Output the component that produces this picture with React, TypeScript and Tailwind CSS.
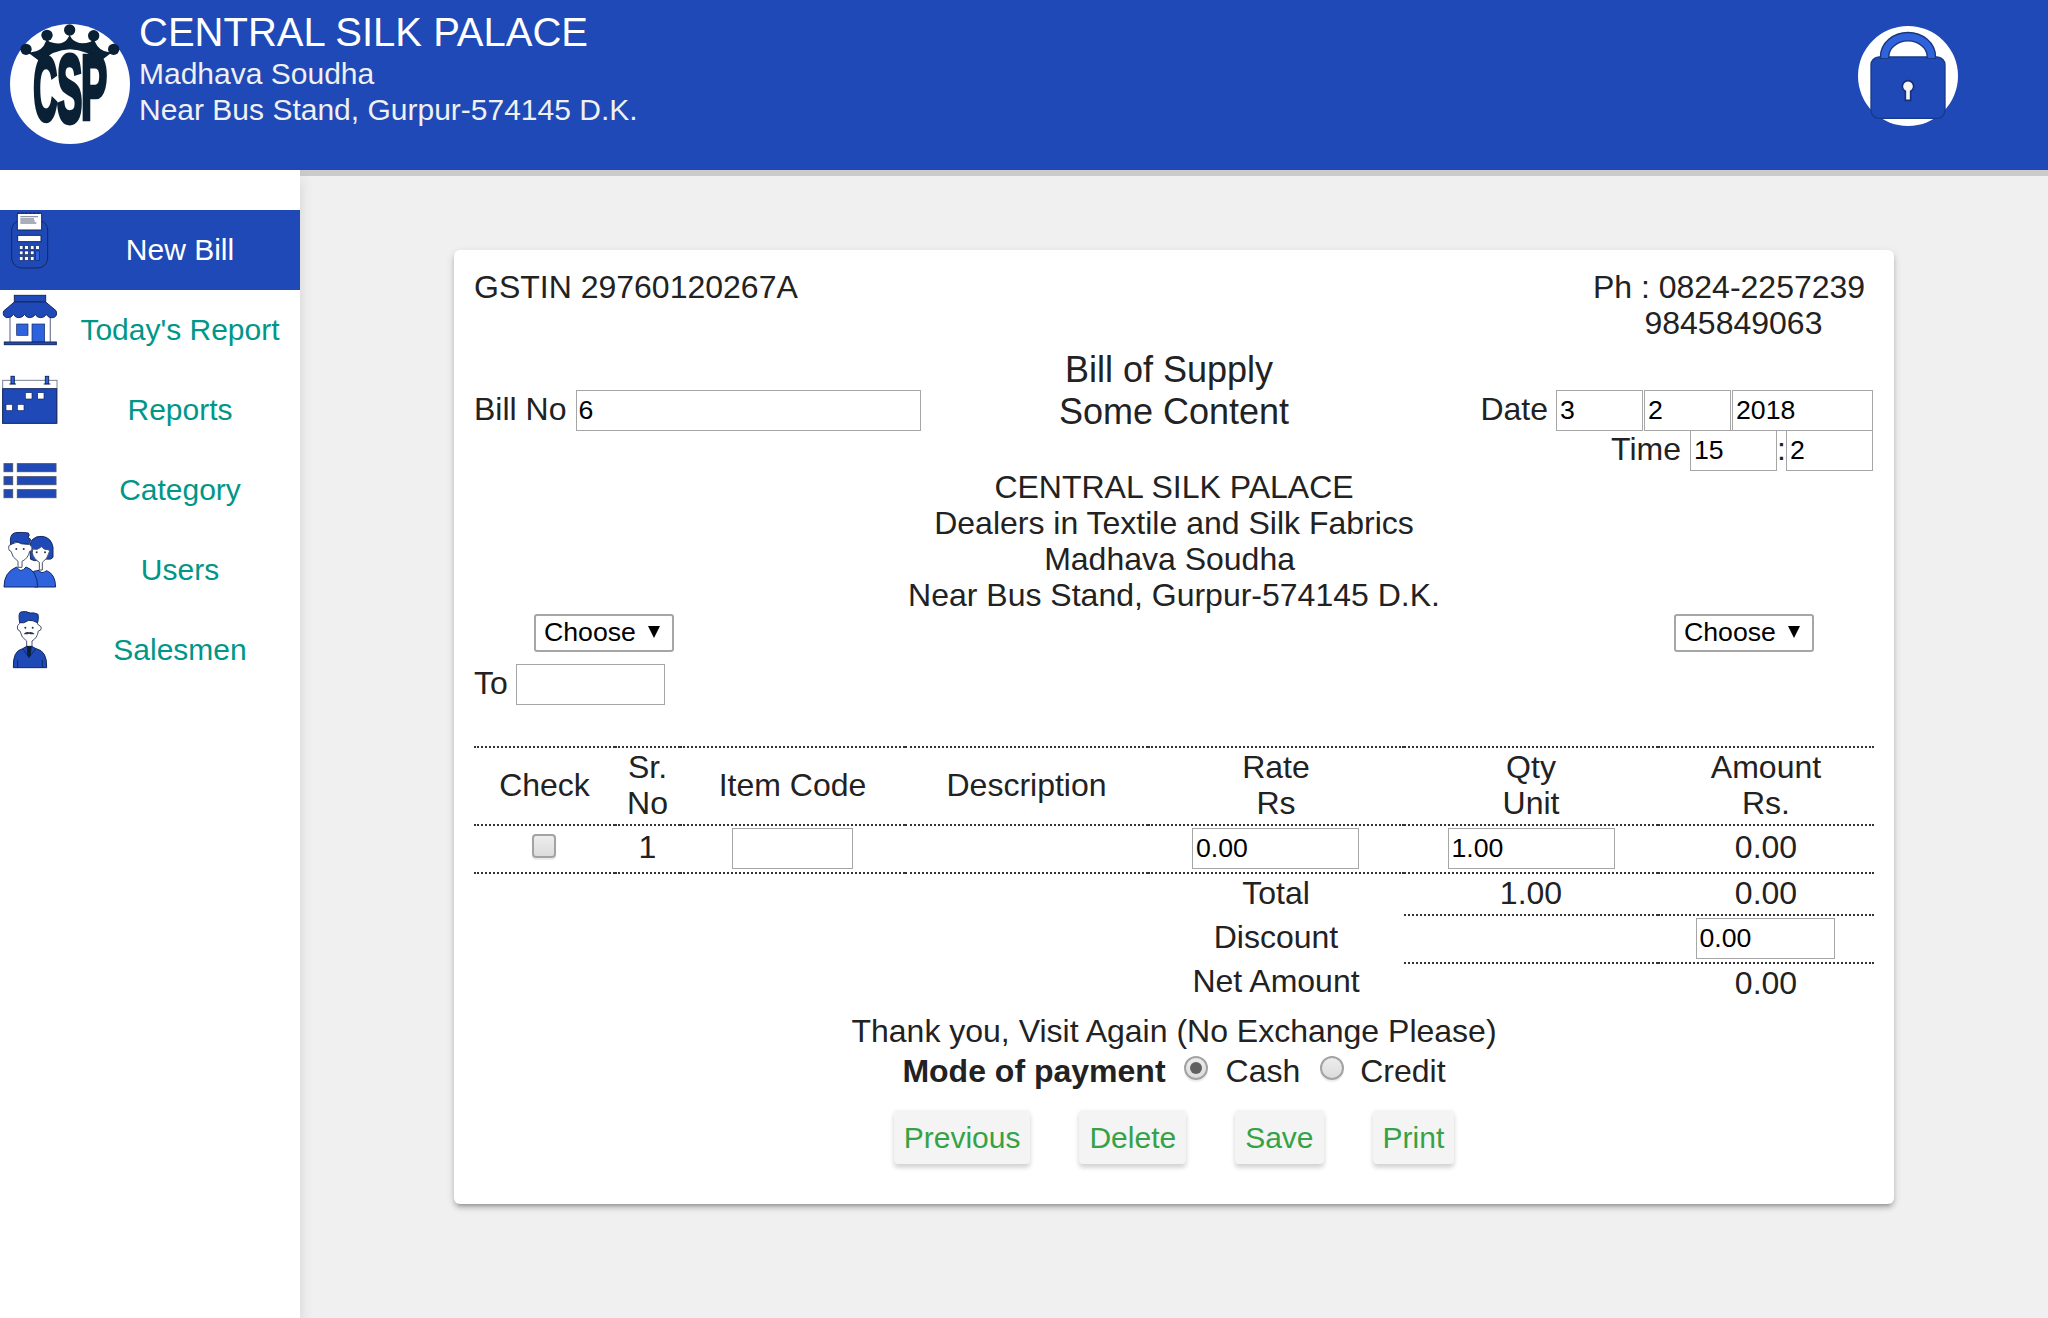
import React from "react";
import clsx from "clsx";

const NAVY = "#0a2034";
const BLUE = "#1f49b6";
const LIGHT = "#2f63dd";
const EDGE = "#14295f";

function Logo() {
  return (
    <svg viewBox="30 27 360 360" className="size-[120px] shrink-0">
      <circle cx="210" cy="207" r="180" fill="#fff" />
      <g fill={NAVY}>
        <circle cx="78" cy="103" r="17" />
        <circle cx="141" cy="61" r="17" />
        <circle cx="209" cy="45" r="17" />
        <circle cx="281" cy="62" r="17" />
        <circle cx="341" cy="103" r="17" />
        <path d="M78 108 L94 112 Q128 108 137 80 L141 72 L148 80 Q186 94 202 72 L209 60 L216 72 Q236 92 272 80 L281 72 L285 80 Q296 108 328 112 L341 108 L298 141 Q260 104 210 103 Q160 104 122 141 Z" />
      </g>
      <g
        fill={NAVY}
        stroke={NAVY}
        strokeWidth="5"
        fontFamily="Liberation Sans"
        fontWeight="700"
        fontSize="100"
      >
        <text transform="translate(100 314) scale(1 2.75)">C</text>
        <text transform="translate(171 320) scale(1.14 2.88)">S</text>
        <text transform="translate(243 313) scale(1.18 2.72)">P</text>
      </g>
    </svg>
  );
}

function LockIcon() {
  return (
    <svg viewBox="234 78 300 300" className="size-[100px]">
      <circle cx="384" cy="228" r="150" fill="#fff" />
      <rect x="273" y="171" width="222" height="184" rx="24" fill={BLUE} stroke="#183a8c" strokeWidth="4" />
      <path d="M314 176 V170 A70 60 0 0 1 454 170 V176" fill="none" stroke="#1c3577" strokeWidth="29" />
      <path d="M314 174 V170 A70 60 0 0 1 454 170 V174" fill="none" stroke={LIGHT} strokeWidth="21" />
      <path
        d="M376 301 V274 A17 17 0 1 1 392 274 V301 Z"
        fill="#f5f5f5"
        stroke="#17307a"
        strokeWidth="5"
      />
    </svg>
  );
}

function BillIcon() {
  return (
    <svg viewBox="0 90 180 180" className="size-[60px]">
      <rect x="35" y="120" width="108" height="144" rx="30" fill={BLUE} stroke={EDGE} strokeWidth="3" />
      <path d="M52 150 V100 H125 V150 Z" fill="#fff" stroke={EDGE} strokeWidth="3" />
      <path d="M52 100 H125" stroke={EDGE} strokeWidth="4" strokeDasharray="6 6" />
      <path d="M61 110 H114 M61 117 H102 M61 123 H104 M61 129 H109" stroke="#8d94a8" strokeWidth="4" />
      <rect x="53" y="166" width="70" height="19" fill="#fff" stroke={EDGE} strokeWidth="3" />
      <g fill="#fff" stroke={EDGE} strokeWidth="2">
        {[197, 213, 230].map((y) =>
          [58, 74, 91].map((x) => <rect key={`${x}-${y}`} x={x} y={y} width="11" height="11" />),
        )}
        <rect x="107" y="197" width="11" height="11" />
        <rect x="107" y="213" width="11" height="28" fill={LIGHT} />
      </g>
    </svg>
  );
}

function ShopIcon() {
  return (
    <svg viewBox="0 330 180 180" className="size-[60px]">
      <path d="M30 400 V486 M151 400 V486" stroke="#8088a0" strokeWidth="4" />
      <rect x="43" y="346" width="94" height="20" fill={BLUE} stroke={EDGE} strokeWidth="3" />
      <path
        d="M43 366 H137 L168 392 Q174 408 160 413 Q145 415 139 403 Q134 413 122 413 Q110 413 106 403 Q101 413 89 413 Q78 413 74 403 Q68 413 56 413 Q45 413 41 403 Q34 414 20 413 Q6 408 11 393 Z"
        fill={BLUE}
        stroke={EDGE}
        strokeWidth="3"
      />
      <rect x="50" y="432" width="34" height="34" fill={LIGHT} stroke={EDGE} strokeWidth="2" />
      <rect x="96" y="432" width="38" height="54" fill={LIGHT} stroke={EDGE} strokeWidth="2" />
      <rect x="13" y="486" width="156" height="8" fill={BLUE} stroke={EDGE} strokeWidth="3" />
    </svg>
  );
}

function CalendarIcon() {
  return (
    <svg viewBox="0 570 180 180" className="size-[60px]">
      <rect x="8" y="601" width="163" height="128" fill="#fff" stroke="#7a8299" strokeWidth="3" />
      <rect x="8" y="626" width="162" height="104" fill={BLUE} stroke={EDGE} strokeWidth="3" />
      <path d="M28 612 H48 M131 612 H151" stroke={EDGE} strokeWidth="3" />
      <rect x="33" y="589" width="10" height="22" fill={LIGHT} stroke={EDGE} strokeWidth="3" />
      <rect x="136" y="589" width="10" height="22" fill={LIGHT} stroke={EDGE} strokeWidth="3" />
      <g fill="#fff" stroke={EDGE} strokeWidth="2">
        <rect x="76" y="638" width="20" height="19" />
        <rect x="113" y="638" width="19" height="19" />
        <rect x="18" y="673" width="19" height="19" />
        <rect x="52" y="673" width="20" height="19" />
      </g>
    </svg>
  );
}

function ListIcon() {
  return (
    <svg viewBox="0 60 180 180" className="size-[60px]">
      <g fill={BLUE} stroke="#4a5470" strokeWidth="3">
        {[101, 140, 179].map((y) => (
          <React.Fragment key={y}>
            <rect x="12" y={y} width="26" height="24" />
            <rect x="52" y={y} width="116" height="24" />
          </React.Fragment>
        ))}
      </g>
    </svg>
  );
}

function UsersIcon() {
  return (
    <svg viewBox="0 300 180 180" className="size-[60px]">
      <g strokeWidth="3" stroke="#4a5470" strokeLinejoin="round">
        <path d="M92 388 Q86 340 96 330 Q108 317 126 319 Q154 322 159 352 L159 382 Q154 390 141 387 L104 392 Z" fill={BLUE} stroke={EDGE} />
        <path d="M98 357 Q114 362 124 350 Q134 362 146 359 Q151 364 146 370 Q143 386 127 397 V420 H118 V397 Q100 386 97 368 Z" fill="#fff" />
        <path d="M101 424 Q110 422 117 421 Q124 434 140 422 Q166 432 167 471 H104 Z" fill={LIGHT} stroke={EDGE} />
        <path d="M33 343 Q24 345 26 355 Q26 363 33 364 Q36 382 54 394 V412 H66 V394 Q84 386 89 364 Q97 363 96 354 Q95 348 89 345 L76 328 Z" fill="#fff" />
        <path d="M32 344 Q27 312 46 308 Q68 306 85 309 Q91 316 84 322 L92 328 Q88 342 86 343 Q62 344 48 334 Q38 338 32 344 Z" fill={BLUE} stroke={EDGE} />
        <path d="M12 471 Q12 426 50 411 Q62 432 78 411 Q112 422 113 471 Z" fill={LIGHT} stroke={EDGE} />
      </g>
      <g fill="#2a3350">
        <circle cx="49" cy="357" r="3" />
        <circle cx="71" cy="357" r="3" />
        <circle cx="110" cy="367" r="3" />
        <circle cx="135" cy="367" r="3" />
      </g>
    </svg>
  );
}

function SalesmanIcon() {
  return (
    <svg viewBox="0 540 180 180" className="size-[60px]">
      <g strokeWidth="3" stroke="#4a5470" strokeLinejoin="round">
        <path d="M59 580 Q51 586 52 594 Q53 602 60 603 Q64 624 80 633 V654 H96 V633 Q112 624 115 603 Q124 602 124 594 Q123 587 115 585 L105 568 H70 Z" fill="#fff" />
        <path d="M59 578 Q54 550 62 546 Q76 542 91 549 Q104 547 114 553 Q117 565 113 578 Q98 570 86 571 Q70 582 59 578 Z" fill={BLUE} stroke={EDGE} />
        <path d="M40 713 Q38 662 68 656 L80 649 H95 L108 656 Q142 662 140 713 Z" fill={BLUE} stroke={EDGE} />
        <path d="M68 656 L87 682 L108 656 M53 690 V713 M127 690 V713" fill="none" stroke={EDGE} />
      </g>
      <path d="M80 649 H95 L92 676 L87 684 L82 676 Z" fill={NAVY} />
      <path d="M71 612 Q78 604 87 607 Q96 604 104 612 Q94 614 87 611 Q80 614 71 612 Z" fill="#2a3350" />
      <circle cx="76" cy="593" r="3" fill="#2a3350" />
      <circle cx="98" cy="593" r="3" fill="#2a3350" />
    </svg>
  );
}

const NAV = [
  { label: "New Bill", Icon: BillIcon, active: true },
  { label: "Today's Report", Icon: ShopIcon },
  { label: "Reports", Icon: CalendarIcon },
  { label: "Category", Icon: ListIcon },
  { label: "Users", Icon: UsersIcon },
  { label: "Salesmen", Icon: SalesmanIcon },
];

function Field({ value = "", className }: { value?: string; className?: string }) {
  return (
    <input
      defaultValue={value}
      className={clsx(
        "block h-[41px] shrink-0 border border-[#a6a6a6] bg-white text-[26.67px] leading-[32px] text-black outline-none",
        className,
      )}
    />
  );
}

function Choose() {
  return (
    <button className="flex h-[38px] w-[140px] items-center rounded-[3px] border-2 border-[#a6a6a6] bg-white pb-0.5 pl-2 text-[26.67px] leading-[32px] text-black">
      Choose
      <svg viewBox="0 0 12 12" className="ml-3 h-3 w-3">
        <path d="M0 0 H12 L6 12 Z" fill="#000" />
      </svg>
    </button>
  );
}

function Radio({ checked = false }: { checked?: boolean }) {
  return (
    <span className="flex size-6 items-center justify-center rounded-full border-2 border-[#a3a3a3] bg-linear-to-b from-[#ededed] to-[#dcdcdc] shadow-[0_2px_1px_rgba(0,0,0,0.08)]">
      {checked && <span className="size-3 rounded-full bg-[#606060]" />}
    </span>
  );
}

function ActionButton({ children }: { children: React.ReactNode }) {
  return (
    <button className="h-[54px] rounded-[4px] bg-[#f4f4f4] px-2.5 pt-0.5 text-[30px] leading-[36px] text-[#35a246] shadow-[0_4px_4px_rgba(0,0,0,0.12),0_2px_6px_rgba(0,0,0,0.08)]">
      {children}
    </button>
  );
}

const RULE = "border-t-2 border-dotted border-[#333]";

export default function App() {
  return (
    <div className="flex h-[1318px] w-[2048px] flex-col overflow-hidden bg-[#f0f0f0] font-['Liberation_Sans',Arial,sans-serif] text-[32px] leading-[36px] text-[#222]">
      <header className="flex h-[170px] shrink-0 justify-between bg-[#1f49b6] pr-[90px] pl-2.5">
        <div className="flex">
          <div className="pt-6">
            <Logo />
          </div>
          <div className="pt-[9px] pl-[9px] text-[30px] text-[#f0f0f0]">
            <h1 className="text-[40px] leading-[47px] text-white">CENTRAL SILK PALACE</h1>
            <p>Madhava Soudha</p>
            <p>Near Bus Stand, Gurpur-574145 D.K.</p>
          </div>
        </div>
        <button className="mt-[26px] h-[100px]">
          <LockIcon />
        </button>
      </header>

      <div className="flex min-h-0 flex-1">
        <nav className="z-10 w-[300px] shrink-0 bg-white pt-10 shadow-[0_8px_14px_rgba(0,0,0,0.12)] [clip-path:inset(0_-20px_0_0)]">
          {NAV.map(({ label, Icon, active }) => (
            <a
              key={label}
              className={clsx(
                "flex h-20 text-[30px]",
                active ? "bg-[#1f49b6] text-white" : "text-[#009688]",
              )}
            >
              <Icon />
              <span className="flex flex-1 items-center justify-center">{label}</span>
            </a>
          ))}
        </nav>

        <main className="flex-1 border-t-[6px] border-[#cbcbcb] pt-[74px] pl-[154px]">
          <section className="h-[954px] w-[1440px] rounded-[6px] bg-white px-5 pt-[19px] shadow-[0_4px_4px_rgba(0,0,0,0.14),0_6px_2px_-4px_rgba(0,0,0,0.12),0_3px_8px_rgba(0,0,0,0.14)]">
            <div className="grid h-[200px] grid-cols-[470px_460px_470px]">
              <div>
                <p>GSTIN 29760120267A</p>
                <div className="mt-[85px] flex">
                  <span className="mt-px">Bill No</span>
                  <Field value="6" className="ml-[10px] w-[345px] pl-px" />
                </div>
              </div>
              <div className="pt-20 text-center text-[36px] leading-[42px]">
                <p>Bill of Supply&nbsp;</p>
                <p>Some Content</p>
              </div>
              <div className="flex flex-col items-end">
                <div className="w-[290px] text-center">
                  <p>Ph : 0824-2257239</p>
                  <p>&nbsp;9845849063</p>
                </div>
                <div className="mt-[49px] mr-px flex">
                  <span className="mt-px mr-2">Date</span>
                  <Field value="3" className="w-[87px] pl-[3px]" />
                  <Field value="2" className="ml-px w-[87px] pl-[3px]" />
                  <Field value="2018" className="ml-px w-[141px] pl-[3px]" />
                </div>
                <div className="-mt-px mr-px flex">
                  <span className="mt-px mr-[9px]">Time</span>
                  <Field value="15" className="w-[87px] pl-[3px]" />
                  <span className="mt-px w-[9px]">:</span>
                  <Field value="2" className="w-[87px] pl-[3px]" />
                </div>
              </div>
            </div>

            <div className="text-center">
              <p>CENTRAL SILK PALACE</p>
              <p>Dealers in Textile and Silk Fabrics</p>
              <p>Madhava Soudha&nbsp;</p>
              <p>Near Bus Stand, Gurpur-574145 D.K.</p>
            </div>

            <div className="mt-px flex justify-between px-[60px]">
              <Choose />
              <Choose />
            </div>
            <div className="mt-3 flex">
              <span className="mt-px w-[42px]">To</span>
              <Field className="w-[149px]" />
            </div>

            <table className="mt-[41px] w-[1400px] table-fixed border-separate border-spacing-0 text-center">
              <colgroup>
                <col className="w-[141px]" />
                <col className="w-[65px]" />
                <col className="w-[225px]" />
                <col className="w-[243px]" />
                <col className="w-[256px]" />
                <col className="w-[254px]" />
                <col className="w-[216px]" />
              </colgroup>
              <tbody>
                <tr className="h-[78px] *:pb-0.5">
                  <td className={RULE}>Check</td>
                  <td className={RULE}>Sr. No</td>
                  <td className={RULE}>Item Code</td>
                  <td className={RULE}>Description</td>
                  <td className={RULE}>Rate<br />Rs</td>
                  <td className={RULE}>Qty<br />Unit</td>
                  <td className={RULE}>Amount<br />Rs.</td>
                </tr>
                <tr className="h-12 align-top">
                  <td className={clsx(RULE, "pt-2 pr-0.5")}>
                    <input
                      type="checkbox"
                      className="mx-auto block size-6 appearance-none rounded-[4px] border-2 border-[#a3a3a3] bg-linear-to-b from-[#ededed] to-[#dcdcdc] shadow-[0_2px_1px_rgba(0,0,0,0.08)]"
                    />
                  </td>
                  <td className={clsx(RULE, "pt-[3px]")}>1</td>
                  <td className={clsx(RULE, "pt-0.5")}>
                    <Field className="mx-auto w-[121px]" />
                  </td>
                  <td className={RULE} />
                  <td className={clsx(RULE, "pt-0.5 pr-px")}>
                    <Field value="0.00" className="mx-auto w-[167px] pl-[3px]" />
                  </td>
                  <td className={clsx(RULE, "pt-0.5")}>
                    <Field value="1.00" className="mx-auto w-[167px] pl-[3px]" />
                  </td>
                  <td className={clsx(RULE, "pt-[3px]")}>0.00</td>
                </tr>
                <tr className="h-[42px] align-top">
                  <td className={RULE} />
                  <td className={RULE} />
                  <td className={RULE} />
                  <td className={RULE} />
                  <td className={clsx(RULE, "pt-px")}>Total</td>
                  <td className={clsx(RULE, "pt-px")}>1.00</td>
                  <td className={clsx(RULE, "pt-px")}>0.00</td>
                </tr>
                <tr className="h-12 align-top">
                  <td colSpan={4} />
                  <td className="pt-[5px]">Discount</td>
                  <td className={RULE} />
                  <td className={clsx(RULE, "pt-0.5 pr-0.5")}>
                    <Field value="0.00" className="mx-auto w-[139px] pl-[3px]" />
                  </td>
                </tr>
                <tr className="h-[42px] align-top">
                  <td colSpan={4} />
                  <td className="pt-px">Net Amount</td>
                  <td className={RULE} />
                  <td className={clsx(RULE, "pt-px")}>0.00</td>
                </tr>
              </tbody>
            </table>

            <p className="mt-[9px] text-center">Thank you, Visit Again (No Exchange Please)</p>
            <div className="mt-1 flex items-start justify-center">
              <b className="mr-[18px]">Mode of payment</b>
              <span className="mt-[3px] mr-[18px]">
                <Radio checked />
              </span>
              <span>Cash</span>
              <span className="mt-[3px] mr-4 ml-5">
                <Radio />
              </span>
              <span>Credit</span>
            </div>

            <div className="mt-[21px] flex justify-center gap-[49px]">
              <ActionButton>Previous</ActionButton>
              <ActionButton>Delete</ActionButton>
              <ActionButton>Save</ActionButton>
              <ActionButton>Print</ActionButton>
            </div>
          </section>
        </main>
      </div>
    </div>
  );
}
